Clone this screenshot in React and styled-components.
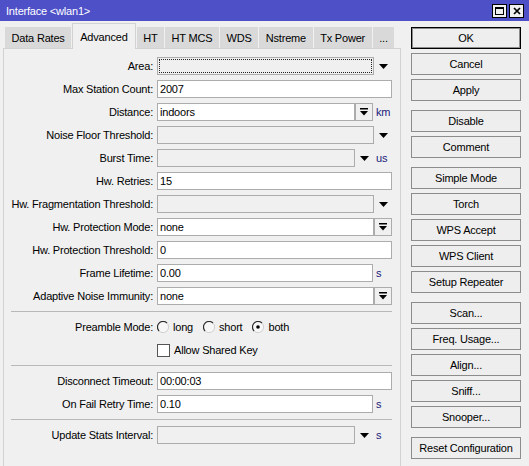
import React from "react";
import styled, { createGlobalStyle } from "styled-components";

const Global = createGlobalStyle`
  html, body { margin: 0; padding: 0; background: #f0f0f0; }
  body {
    font-family: "Liberation Sans", Arial, sans-serif;
    font-size: 11px;
    letter-spacing: -0.2px;
    color: #000;
  }
  * { box-sizing: border-box; }
`;

const Window = styled.div`
  width: 529px;
  height: 466px;
  overflow: hidden;
  display: flex;
  flex-direction: column;
  background: #f0f0f0;
`;

const TitleBar = styled.div`
  height: 21px;
  flex: none;
  background: #4e50c8;
  display: flex;
  align-items: center;
  padding: 0 5px 0 6px;
  color: #fff;
`;

const Title = styled.div`
  flex: 1;
`;

const WinButtons = styled.div`
  display: flex;
  gap: 2px;
`;

const WinButton = styled.div`
  width: 15px;
  height: 14px;
  background: #f0f0f0;
  border: 1px solid #000;
  display: flex;
  align-items: center;
  justify-content: center;
`;

const Body = styled.div`
  flex: 1;
  display: flex;
  min-height: 0;
`;

const LeftCol = styled.div`
  width: 398px;
  margin-left: 3px;
  padding-top: 2px;
  display: flex;
  flex-direction: column;
`;

const TabRow = styled.div`
  height: 25px;
  flex: none;
  display: flex;
  align-items: flex-end;
  gap: 1px;
  padding-left: 2px;
`;

const Tab = styled.div`
  height: ${(p) => (p.$active ? "26px" : "21px")};
  margin-bottom: ${(p) => (p.$active ? "-1px" : "0")};
  padding: 0 ${(p) => (p.$active ? "7px" : "6.6px")};
  display: flex;
  align-items: center;
  white-space: nowrap;
  background: ${(p) => (p.$active ? "#f0f0f0" : "#d9d9d9")};
  border: ${(p) => (p.$active ? "1px solid #d2d2d2" : "none")};
  border-bottom: none;
  position: relative;
  z-index: ${(p) => (p.$active ? 1 : 0)};
`;

const Panel = styled.div`
  flex: 1;
  border: 1px solid #d2d2d2;
  border-bottom: none;
  padding: 8px 8px 0 0;
  display: flex;
  flex-direction: column;
  gap: 5px;
`;

const Row = styled.div`
  display: grid;
  grid-template-columns: 149px 235px;
  column-gap: 4px;
  align-items: center;
  height: 18px;
`;

const Label = styled.div`
  text-align: right;
  white-space: nowrap;
`;

const Field = styled.div`
  display: flex;
  align-items: center;
  height: 18px;
`;

const Box = styled.div`
  flex: 1;
  height: 18px;
  border: 1px solid #acacac;
  background: ${(p) => (p.$disabled ? "#f0f0f0" : "#fff")};
  padding-left: 2px;
  line-height: 16px;
  white-space: nowrap;
  overflow: hidden;
  outline: ${(p) => (p.$focus ? "1px dotted #222" : "none")};
  outline-offset: -3px;
`;

const ArrowCell = styled.div`
  width: 18px;
  height: 18px;
  flex: none;
  display: flex;
  align-items: center;
  justify-content: center;
`;

const SpinButton = styled.div`
  width: 18px;
  height: 18px;
  flex: none;
  display: flex;
  align-items: center;
  justify-content: center;
  border: 1px solid #acacac;
  background: #f0f0f0;
`;

const Unit = styled.div`
  width: 19px;
  flex: none;
  padding-left: 3px;
  color: #20207a;
  white-space: nowrap;
`;

const Separator = styled.div`
  height: 1px;
  margin: 1px 0 1px 7px;
  background: #b9b9b9;
  flex: none;
`;

const Options = styled.div`
  display: flex;
  align-items: center;
  gap: 10px;
`;

const Option = styled.label`
  display: flex;
  align-items: center;
  gap: 4px;
`;

const CheckBox = styled.span`
  width: 13px;
  height: 13px;
  border: 1px solid #555;
  background: #fff;
  display: inline-block;
`;

const RightCol = styled.div`
  width: 110px;
  margin-left: 10px;
  padding-top: 6px;
  display: flex;
  flex-direction: column;
  gap: 9px;
`;

const ButtonGroup = styled.div`
  display: flex;
  flex-direction: column;
  gap: 4px;
`;

const Button = styled.div`
  height: 22px;
  border: 1px solid ${(p) => (p.$default ? "#000" : "#8c8c8c")};
  box-shadow: ${(p) => (p.$default ? "inset 0 0 0 1px #8c8c8c" : "none")};
  background: #eeeeee;
  display: flex;
  align-items: center;
  justify-content: center;
  white-space: nowrap;
`;

const DownArrow = () => (
  <svg width="9" height="5" viewBox="0 0 9 5">
    <polygon points="0,0 9,0 4.5,5" fill="#000" />
  </svg>
);

const BarArrow = () => (
  <svg width="8" height="8" viewBox="0 0 8 8">
    <rect x="0" y="0" width="8" height="1.5" fill="#000" />
    <polygon points="0,3 8,3 4,7.5" fill="#000" />
  </svg>
);

const Radio = ({ checked }) => (
  <svg width="12" height="12" viewBox="0 0 12 12">
    <circle cx="6" cy="6" r="5.5" fill="#f7f7f7" />
    <path d="M10 2.1 A5.4 5.4 0 0 0 2.1 10" stroke="#2a2a2a" strokeWidth="1.2" fill="none" />
    <path d="M2.1 10 A5.4 5.4 0 0 0 10 2.1" stroke="#d0d0d0" strokeWidth="1" fill="none" />
    {checked && <circle cx="6" cy="6" r="1.8" fill="#000" />}
  </svg>
);

const MaxIcon = () => (
  <svg width="9" height="8" viewBox="0 0 9 8">
    <rect x="0.5" y="0.5" width="8" height="7" fill="none" stroke="#000" />
    <rect x="0" y="0" width="9" height="2" fill="#000" />
  </svg>
);

const CloseIcon = () => (
  <svg width="8" height="8" viewBox="0 0 8 8">
    <path d="M1 1 L7 7 M7 1 L1 7" stroke="#000" strokeWidth="1.7" />
  </svg>
);

const tabs = ["Data Rates", "Advanced", "HT", "HT MCS", "WDS", "Nstreme", "Tx Power", "..."];

const FormRow = ({ label, value = "", disabled, focus, dd, btn, unit }) => (
  <Row>
    <Label>{label}</Label>
    <Field>
      <Box $disabled={disabled} $focus={focus}>{value}</Box>
      {dd && (
        <ArrowCell>
          <DownArrow />
        </ArrowCell>
      )}
      {btn && (
        <SpinButton>
          <BarArrow />
        </SpinButton>
      )}
      {unit !== undefined && <Unit>{unit}</Unit>}
    </Field>
  </Row>
);

const mainRows = [
  { label: "Area:", disabled: true, focus: true, dd: true },
  { label: "Max Station Count:", value: "2007" },
  { label: "Distance:", value: "indoors", btn: true, unit: "km" },
  { label: "Noise Floor Threshold:", disabled: true, dd: true },
  { label: "Burst Time:", disabled: true, dd: true, unit: "us" },
  { label: "Hw. Retries:", value: "15" },
  { label: "Hw. Fragmentation Threshold:", disabled: true, dd: true },
  { label: "Hw. Protection Mode:", value: "none", btn: true },
  { label: "Hw. Protection Threshold:", value: "0" },
  { label: "Frame Lifetime:", value: "0.00", unit: "s" },
  { label: "Adaptive Noise Immunity:", value: "none", btn: true },
];

const buttonGroups = [
  ["OK", "Cancel", "Apply"],
  ["Disable", "Comment"],
  ["Simple Mode", "Torch", "WPS Accept", "WPS Client", "Setup Repeater"],
  ["Scan...", "Freq. Usage...", "Align...", "Sniff...", "Snooper..."],
  ["Reset Configuration"],
];

export default function App() {
  return (
    <>
      <Global />
      <Window>
        <TitleBar>
          <Title>{"Interface <wlan1>"}</Title>
          <WinButtons>
            <WinButton>
              <MaxIcon />
            </WinButton>
            <WinButton>
              <CloseIcon />
            </WinButton>
          </WinButtons>
        </TitleBar>
        <Body>
          <LeftCol>
            <TabRow>
              {tabs.map((t) => (
                <Tab key={t} $active={t === "Advanced"}>
                  {t}
                </Tab>
              ))}
            </TabRow>
            <Panel>
              {mainRows.map((r) => (
                <FormRow key={r.label} {...r} />
              ))}
              <Separator />
              <Row>
                <Label>Preamble Mode:</Label>
                <Options>
                  <Option>
                    <Radio />
                    long
                  </Option>
                  <Option>
                    <Radio />
                    short
                  </Option>
                  <Option>
                    <Radio checked />
                    both
                  </Option>
                </Options>
              </Row>
              <Row>
                <Label />
                <Option>
                  <CheckBox />
                  Allow Shared Key
                </Option>
              </Row>
              <Separator />
              <FormRow label="Disconnect Timeout:" value="00:00:03" />
              <FormRow label="On Fail Retry Time:" value="0.10" unit="s" />
              <Separator />
              <FormRow label="Update Stats Interval:" disabled dd unit="s" />
            </Panel>
          </LeftCol>
          <RightCol>
            {buttonGroups.map((g, i) => (
              <ButtonGroup key={i}>
                {g.map((b) => (
                  <Button key={b} $default={b === "OK"}>
                    {b}
                  </Button>
                ))}
              </ButtonGroup>
            ))}
          </RightCol>
        </Body>
      </Window>
    </>
  );
}
